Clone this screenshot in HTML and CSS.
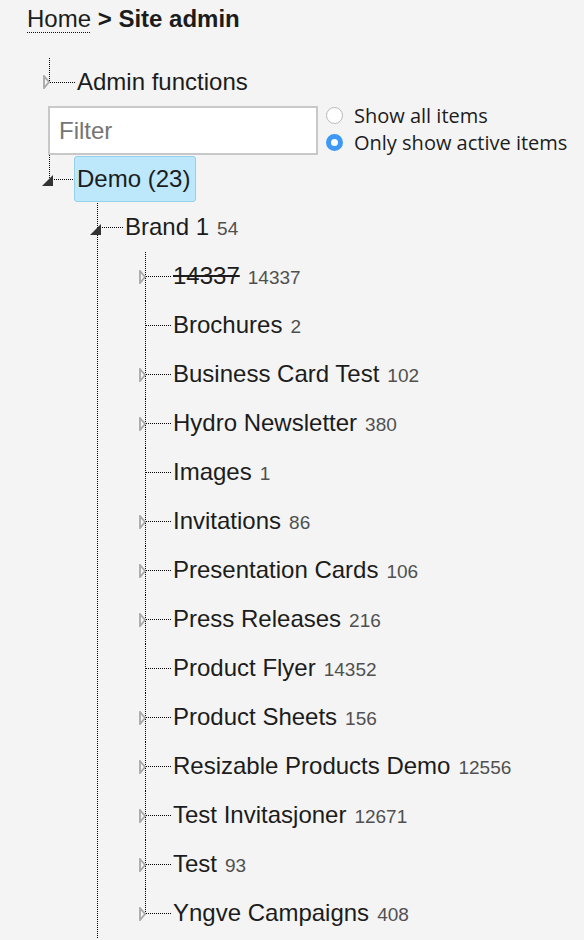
FILE: index.html
```html
<!DOCTYPE html>
<html lang="en">
<head>
<meta charset="utf-8">
<title>Site admin</title>
<link rel="stylesheet" href="styles.css">
</head>
<body>
<div class="page">
  <div class="crumbs"><a class="home" href="#">Home</a> <b>&gt; Site admin</b></div>

  <ul class="tree tree-top">
    <li class="node last">
      <div class="row root-row">
        <span class="tw"><svg class="closed" width="7" height="14" viewBox="0 0 7 14"><polygon points="1,1 6,7 1,13" fill="none" stroke="#a8a8a8" stroke-width="1.8"/></svg></span>
        <span class="hline"></span>
        <span class="label">Admin functions</span>
      </div>
    </li>
  </ul>

  <div class="filter-row">
    <input class="filter" type="text" placeholder="Filter">
    <div class="radios">
      <label class="radio"><span class="dot"></span>Show all items</label>
      <label class="radio"><span class="dot on"></span>Only show active items</label>
    </div>
  </div>

  <ul class="tree">
    <li class="node last">
      <div class="row root-row">
        <span class="tw"><svg class="open" width="11" height="11" viewBox="0 0 11 11"><polygon points="11,0 11,11 0,11" fill="#333"/></svg></span>
        <span class="hline"></span>
        <span class="label sel">Demo (23)</span>
      </div>
      <ul>
        <li class="node">
          <div class="row">
            <span class="tw"><svg class="open" width="11" height="11" viewBox="0 0 11 11"><polygon points="11,0 11,11 0,11" fill="#333"/></svg></span>
            <span class="hline"></span>
            <span class="label">Brand 1<span class="count">54</span></span>
          </div>
          <ul>
            <li class="node">
              <div class="row">
                <span class="tw"><svg class="closed" width="7" height="14" viewBox="0 0 7 14"><polygon points="1,1 6,7 1,13" fill="none" stroke="#a8a8a8" stroke-width="1.8"/></svg></span>
                <span class="hline"></span>
                <span class="label"><s>14337</s><span class="count">14337</span></span>
              </div>
            </li>
            <li class="node">
              <div class="row">
                <span class="tw"></span>
                <span class="hline"></span>
                <span class="label">Brochures<span class="count">2</span></span>
              </div>
            </li>
            <li class="node">
              <div class="row">
                <span class="tw"><svg class="closed" width="7" height="14" viewBox="0 0 7 14"><polygon points="1,1 6,7 1,13" fill="none" stroke="#a8a8a8" stroke-width="1.8"/></svg></span>
                <span class="hline"></span>
                <span class="label">Business Card Test<span class="count">102</span></span>
              </div>
            </li>
            <li class="node">
              <div class="row">
                <span class="tw"><svg class="closed" width="7" height="14" viewBox="0 0 7 14"><polygon points="1,1 6,7 1,13" fill="none" stroke="#a8a8a8" stroke-width="1.8"/></svg></span>
                <span class="hline"></span>
                <span class="label">Hydro Newsletter<span class="count">380</span></span>
              </div>
            </li>
            <li class="node">
              <div class="row">
                <span class="tw"></span>
                <span class="hline"></span>
                <span class="label">Images<span class="count">1</span></span>
              </div>
            </li>
            <li class="node">
              <div class="row">
                <span class="tw"><svg class="closed" width="7" height="14" viewBox="0 0 7 14"><polygon points="1,1 6,7 1,13" fill="none" stroke="#a8a8a8" stroke-width="1.8"/></svg></span>
                <span class="hline"></span>
                <span class="label">Invitations<span class="count">86</span></span>
              </div>
            </li>
            <li class="node">
              <div class="row">
                <span class="tw"><svg class="closed" width="7" height="14" viewBox="0 0 7 14"><polygon points="1,1 6,7 1,13" fill="none" stroke="#a8a8a8" stroke-width="1.8"/></svg></span>
                <span class="hline"></span>
                <span class="label">Presentation Cards<span class="count">106</span></span>
              </div>
            </li>
            <li class="node">
              <div class="row">
                <span class="tw"><svg class="closed" width="7" height="14" viewBox="0 0 7 14"><polygon points="1,1 6,7 1,13" fill="none" stroke="#a8a8a8" stroke-width="1.8"/></svg></span>
                <span class="hline"></span>
                <span class="label">Press Releases<span class="count">216</span></span>
              </div>
            </li>
            <li class="node">
              <div class="row">
                <span class="tw"></span>
                <span class="hline"></span>
                <span class="label">Product Flyer<span class="count">14352</span></span>
              </div>
            </li>
            <li class="node">
              <div class="row">
                <span class="tw"><svg class="closed" width="7" height="14" viewBox="0 0 7 14"><polygon points="1,1 6,7 1,13" fill="none" stroke="#a8a8a8" stroke-width="1.8"/></svg></span>
                <span class="hline"></span>
                <span class="label">Product Sheets<span class="count">156</span></span>
              </div>
            </li>
            <li class="node">
              <div class="row">
                <span class="tw"><svg class="closed" width="7" height="14" viewBox="0 0 7 14"><polygon points="1,1 6,7 1,13" fill="none" stroke="#a8a8a8" stroke-width="1.8"/></svg></span>
                <span class="hline"></span>
                <span class="label">Resizable Products Demo<span class="count">12556</span></span>
              </div>
            </li>
            <li class="node">
              <div class="row">
                <span class="tw"><svg class="closed" width="7" height="14" viewBox="0 0 7 14"><polygon points="1,1 6,7 1,13" fill="none" stroke="#a8a8a8" stroke-width="1.8"/></svg></span>
                <span class="hline"></span>
                <span class="label">Test Invitasjoner<span class="count">12671</span></span>
              </div>
            </li>
            <li class="node">
              <div class="row">
                <span class="tw"><svg class="closed" width="7" height="14" viewBox="0 0 7 14"><polygon points="1,1 6,7 1,13" fill="none" stroke="#a8a8a8" stroke-width="1.8"/></svg></span>
                <span class="hline"></span>
                <span class="label">Test<span class="count">93</span></span>
              </div>
            </li>
            <li class="node last">
              <div class="row">
                <span class="tw"><svg class="closed" width="7" height="14" viewBox="0 0 7 14"><polygon points="1,1 6,7 1,13" fill="none" stroke="#a8a8a8" stroke-width="1.8"/></svg></span>
                <span class="hline"></span>
                <span class="label">Yngve Campaigns<span class="count">408</span></span>
              </div>
            </li>
          </ul>
        </li>
      </ul>
    </li>
  </ul>
</div>
</body>
</html>
```

FILE: styles.css
```css
html, body {
  margin: 0;
  padding: 0;
  background: #f4f4f4;
}

body {
  font-family: "Liberation Sans", Arial, Helvetica, sans-serif;
  color: #1c1c1c;
}

.page {
  padding: 5px 0 0 27px;
}

.crumbs {
  font-size: 24px;
  line-height: 28px;
  height: 28px;
}

.home {
  color: #1c1c1c;
  text-decoration: none;
  padding-bottom: 1px;
  background-image: repeating-linear-gradient(to right, #111 0, #111 1px, transparent 1px, transparent 2px);
  background-repeat: no-repeat;
  background-size: 100% 1px;
  background-position: 0 100%;
}

.crumbs b {
  font-weight: bold;
}

.tree,
.tree ul {
  list-style: none;
  margin: 0;
  padding: 0;
}

.tree {
  margin-left: 22px;
}

.tree-top {
  margin-top: 25px;
}

.tree ul {
  padding-left: 47px;
}

/* vertical dotted connector drawn at the left edge of each node */
.node {
  padding-left: 1px;
  background-image: repeating-linear-gradient(to bottom, #000 0, #000 1.3px, transparent 1.3px, transparent 2px);
  background-repeat: repeat-y;
  background-size: 1px 100%;
  background-position: 0 0;
}

.node.last {
  background-image: none;
}

.row {
  display: flex;
  align-items: center;
  height: 49px;
  margin-left: -7px;
}

.root-row {
  height: 48px;
}

.node.last > .row {
  background-image: repeating-linear-gradient(to bottom, #000 0, #000 1.3px, transparent 1.3px, transparent 2px);
  background-repeat: no-repeat;
  background-size: 1px 50%;
  background-position: 6px 0;
}

.tw {
  flex: none;
  width: 7px;
  display: flex;
  align-items: center;
}

.tw svg {
  display: block;
  flex: none;
  position: relative;
  z-index: 1;
}

.tw svg.open {
  margin-left: -1px;
  margin-top: 3px;
}

.hline {
  flex: none;
  width: 25px;
  height: 1px;
  background-image: repeating-linear-gradient(to right, #000 0, #000 1.3px, transparent 1.3px, transparent 2px);
}

.label {
  margin-left: 2px;
  font-size: 24px;
  line-height: 28px;
  white-space: nowrap;
}

.label s {
  text-decoration: line-through;
}

.label.sel {
  margin-left: -1px;
  background: #bde7fa;
  border: 1px solid #96d0ea;
  border-radius: 3px;
  padding: 8px 5px 8px 2px;
  line-height: 28px;
}

.count {
  font-size: 19px;
  color: #505050;
  margin-left: 8px;
}

.filter-row {
  display: flex;
  align-items: center;
  margin-left: 21px;
  height: 49px;
}

.filter {
  box-sizing: border-box;
  width: 270px;
  height: 49px;
  margin: 0;
  border: 2px solid #c8c8c8;
  background: #fff;
  padding: 0 9px;
  font-family: "Liberation Sans", Arial, sans-serif;
  font-size: 24px;
  color: #222;
  outline: none;
}

.filter::placeholder {
  color: #757575;
}

.radios {
  display: flex;
  flex-direction: column;
  margin-left: 7px;
  margin-top: -3px;
}

.radio {
  display: flex;
  align-items: center;
  height: 27px;
  font-family: "Open Sans", sans-serif;
  font-size: 20px;
  color: #1c1c1c;
  white-space: nowrap;
}

.dot {
  box-sizing: border-box;
  width: 17px;
  height: 17px;
  border-radius: 50%;
  border: 1px solid #b8b8b8;
  background: #fff;
  margin-right: 11px;
  margin-left: 1px;
  flex: none;
}

.dot.on {
  border: 5.5px solid #3d98f6;
  background: #fff;
}
```
